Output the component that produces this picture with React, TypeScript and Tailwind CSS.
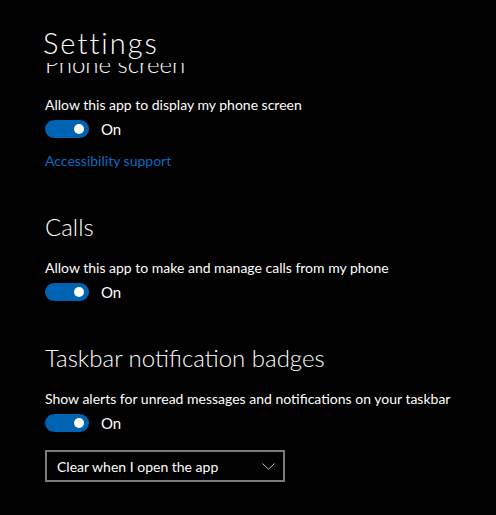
function Toggle() {
    return (
        <div className="flex items-center gap-3 h-[18px]">
            <div className="w-[44px] h-[18px] rounded-full bg-[#0063b1] flex items-center justify-end pr-[5px]">
                <div className="w-[10px] h-[10px] rounded-full bg-white" />
            </div>
            <span className="text-[15px] leading-[18px] text-white">On</span>
        </div>
    );
}

export default function App() {
    return (
        <div
            className="w-[496px] h-[515px] bg-black text-white flex flex-col overflow-hidden"
            style={{ fontFamily: 'Lato, "Open Sans", sans-serif' }}
        >
            <header className="h-[63px] shrink-0 pl-[43px] pt-[25px] bg-black">
                <h1 className="text-[29px] font-light leading-[36px] tracking-[2px]">Settings</h1>
            </header>

            <div className="flex-1 overflow-hidden pl-[45px]">
                <div className="-mt-[14px] flex flex-col">
                    <h2 className="text-[24px] font-light leading-[30px]">Phone screen</h2>
                    <p className="mt-[16px] text-[14px] leading-[20px]">Allow this app to display my phone screen</p>
                    <div className="mt-[5px]"><Toggle /></div>
                    <a className="mt-[13px] text-[14px] leading-[20px] text-[#0b6bc4] self-start">Accessibility support</a>

                    <h2 className="mt-[41px] text-[24px] font-light leading-[30px]">Calls</h2>
                    <p className="mt-[16px] text-[14px] leading-[20px]">Allow this app to make and manage calls from my phone</p>
                    <div className="mt-[5px]"><Toggle /></div>

                    <h2 className="mt-[42px] text-[24px] font-light leading-[30px]">Taskbar notification badges</h2>
                    <p className="mt-[16px] text-[14px] leading-[20px]">Show alerts for unread messages and notifications on your taskbar</p>
                    <div className="mt-[5px]"><Toggle /></div>

                    <div className="mt-[18px] w-[240px] h-[32px] border-2 border-[#7a7a7a] flex items-center justify-between pl-[10px] pr-[8px]">
                        <span className="text-[14px]">Clear when I open the app</span>
                        <svg width="13" height="7" viewBox="0 0 13 7" fill="none" className="text-[#bdbdbd]">
                            <polyline points="0.5,0.5 6.5,6.2 12.5,0.5" stroke="currentColor" strokeWidth="1" />
                        </svg>
                    </div>
                </div>
            </div>
        </div>
    );
}
